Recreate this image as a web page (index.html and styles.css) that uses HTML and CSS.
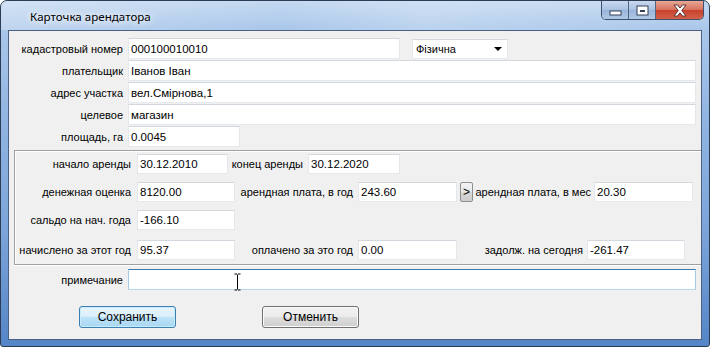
FILE: index.html
```html
<!DOCTYPE html>
<html lang="ru">
<head>
  <meta charset="UTF-8">
  <title>Карточка арендатора</title>
  <link rel="stylesheet" href="styles.css">
</head>
<body>
  <div class="window">
    <div class="titlebar">
      <span class="title">Карточка арендатора</span>
      <div class="caption">
        <span class="cap cap-min">
          <svg width="13" height="6" viewBox="0 0 13 6"><rect x="1" y="1" width="11" height="4" fill="#fff" stroke="#34425a" stroke-width="1"/></svg>
        </span>
        <span class="cap cap-max">
          <svg width="13" height="11" viewBox="0 0 13 11"><rect x="1" y="1" width="11" height="9" fill="#fff" stroke="#34425a"/><rect x="3.5" y="4.5" width="6" height="3" fill="#34425a" stroke="#fff" stroke-width="1"/></svg>
        </span>
        <span class="cap cap-close">
          <svg width="16" height="13" viewBox="0 0 16 13"><path d="M2 1h3.5l2.5 3 2.5-3H14l-4.2 5.5L14 12h-3.5L8 8.8 5.5 12H2l4.2-5.5z" fill="#fff" stroke="#4a2a26" stroke-width="0.9" stroke-linejoin="round"/></svg>
        </span>
      </div>
    </div>

    <div class="client">
      <!-- main fields -->
      <div class="top-fields">
        <div class="row">
          <label class="lbl lbl-top">кадастровый номер</label>
          <input class="tb w272" value="000100010010">
          <div class="combo">Фізична<span class="arrow"></span></div>
        </div>
        <div class="row">
          <label class="lbl lbl-top">плательщик</label>
          <input class="tb w568" value="Іванов Іван">
        </div>
        <div class="row">
          <label class="lbl lbl-top">адрес участка</label>
          <input class="tb w568" value="вел.Смірнова,1">
        </div>
        <div class="row">
          <label class="lbl lbl-top">целевое</label>
          <input class="tb w568" value="магазин">
        </div>
        <div class="row">
          <label class="lbl lbl-top">площадь, га</label>
          <input class="tb w112" value="0.0045">
        </div>
      </div>

      <!-- rent group -->
      <div class="group">
        <div class="grow">
          <label class="lbl lbl-grp">начало аренды</label>
          <input class="tb w91" value="30.12.2010">
          <label class="lbl cell w80 pr5">конец аренды</label>
          <input class="tb w92" value="30.12.2020">
        </div>
        <div class="grow">
          <label class="lbl lbl-grp">денежная оценка</label>
          <input class="tb w98" value="8120.00">
          <label class="lbl cell w123 pr5">арендная плата, в год</label>
          <input class="tb w99" value="243.60">
          <button class="mini">&gt;</button>
          <label class="lbl cell w121 pr3">арендная плата, в мес</label>
          <input class="tb w99" value="20.30">
        </div>
        <div class="grow">
          <label class="lbl lbl-grp">сальдо на нач. года</label>
          <input class="tb w98" value="-166.10">
        </div>
        <div class="grow last">
          <label class="lbl lbl-grp">начислено за этот год</label>
          <input class="tb w98" value="95.37">
          <label class="lbl cell w123 pr5">оплачено за это год</label>
          <input class="tb w99" value="0.00">
          <label class="lbl cell w130 pr4">задолж. на сегодня</label>
          <input class="tb w98" value="-261.47">
        </div>
      </div>

      <div class="row note">
        <label class="lbl lbl-top">примечание</label>
        <input class="tb w568 focused" value="">
        <svg class="ibeam" width="7" height="18" viewBox="0 0 7 18"><path d="M0.5 1h2.5M4 1h2.5M3.5 1.5v15M0.5 17h2.5M4 17h2.5" stroke="#000" stroke-width="1" fill="none"/></svg>
      </div>

      <div class="actions">
        <button class="btn btn-default">Сохранить</button>
        <button class="btn">Отменить</button>
      </div>
    </div>
  </div>
</body>
</html>
```

FILE: styles.css
```css
* {
  box-sizing: border-box;
}
body {
  margin: 0;
  background: #fff;
  font-family: "Liberation Sans", Arial, sans-serif;
  font-size: 11px;
  color: #000;
}
.window {
  width: 710px;
  height: 347px;
  display: flex;
  flex-direction: column;
  border: 1px solid #2b3c55;
  border-radius: 7px 7px 3px 3px;
  background: linear-gradient(180deg, #c4d9f1 0, #aac7ea 28px, #93b6e2 110px, #7ca4d9 230px, #5485c6 100%);
  overflow: hidden;
}
.titlebar {
  height: 29px;
  display: flex;
  align-items: flex-start;
  background: linear-gradient(100deg, rgba(255,255,255,0.25) 0, rgba(255,255,255,0) 40%, rgba(255,255,255,0.2) 60%, rgba(255,255,255,0) 100%);
}
.title {
  margin: 8px 0 0 29px;
  font-family: "Noto Sans", "Open Sans", sans-serif;
  font-size: 11.6px;
  line-height: 16px;
  color: #000;
  text-shadow: 0 0 6px #fff, 0 0 10px #fff;
}
.caption {
  display: flex;
  margin-left: auto;
  margin-right: 5px;
  height: 19px;
  border: 1px solid #3f506b;
  border-top: none;
  border-radius: 0 0 5px 5px;
  overflow: hidden;
}
.cap {
  display: flex;
  align-items: center;
  justify-content: center;
  height: 18px;
}
.cap-min {
  width: 27px;
  padding-top: 5px;
  background: linear-gradient(#c9d9ee, #a9c1e1 50%, #98b4da 50%, #b0c8e6);
  border-right: 1px solid #52657f;
}
.cap-max {
  width: 27px;
  background: linear-gradient(#c9d9ee, #a9c1e1 50%, #98b4da 50%, #b0c8e6);
  border-right: 1px solid #52657f;
}
.cap-close {
  width: 47px;
  background: linear-gradient(#e8a896, #d7705c 50%, #c8412c 50%, #d2604a);
}
.client {
  flex: 1;
  margin: 0 7px 6px 7px;
  border: 1px solid #4a6184;
  background: #f0f0f0;
  padding-top: 7px;
}
.top-fields {
  display: flex;
  flex-direction: column;
  gap: 1px;
}
.row {
  display: flex;
  align-items: center;
  height: 21px;
}
.lbl {
  text-align: right;
  white-space: nowrap;
}
.lbl-top {
  width: 114px;
  margin-right: 5px;
}
.tb {
  height: 21px;
  padding: 0 2px;
  border: 1px solid;
  border-color: #d3d8df #e4e7eb #e6e9ed #e4e7eb;
  background: #fff;
  font: inherit;
  font-size: 11.5px;
  color: #000;
  outline: none;
}
.tb.focused {
  border-color: #3d7bad #a4c9e3 #b7d9ed #a4c9e3;
}
.w91 { width: 91px; }
.w92 { width: 92px; }
.w98 { width: 98px; }
.w99 { width: 99px; }
.w112 { width: 112px; }
.w272 { width: 272px; }
.w568 { width: 568px; }
.combo {
  width: 96px;
  height: 20px;
  margin-left: 12px;
  padding-left: 3px;
  display: flex;
  align-items: center;
  justify-content: space-between;
  border: 1px solid;
  border-color: #d3d8df #e4e7eb #e6e9ed #e4e7eb;
  background: #fff;
}
.arrow {
  width: 0;
  height: 0;
  margin-right: 5px;
  border-top: 4px solid #000;
  border-left: 4px solid transparent;
  border-right: 4px solid transparent;
}
.group {
  margin: 3px 0 0 5px;
  padding: 3px 0 4px 0;
  display: flex;
  flex-direction: column;
  gap: 8px;
  border: 1px solid #a0a0a0;
  border-right: none;
  box-shadow: inset 1px 1px 0 #fff, 0 1px 0 #fff;
}
.grow {
  display: flex;
  align-items: center;
  height: 20px;
}
.grow .tb {
  height: 20px;
}
.grow.last {
  margin-top: 2px;
}
.lbl-grp {
  width: 116px;
  margin-right: 6px;
}
.cell { flex: none; }
.w80 { width: 80px; }
.w121 { width: 121px; }
.w123 { width: 123px; }
.w130 { width: 130px; }
.pr3 { padding-right: 3px; }
.pr4 { padding-right: 4px; }
.pr5 { padding-right: 5px; }
.mini {
  width: 13px;
  height: 20px;
  margin-left: 3px;
  padding: 0;
  border: 1px solid #8e8f8f;
  border-radius: 2px;
  background: linear-gradient(#f4f4f4, #e6e6e6 50%, #d8d8d8 50%, #cdcdcd);
  font: inherit;
  font-size: 12px;
  line-height: 18px;
}
.note {
  position: relative;
  margin-top: 4px;
}
.ibeam {
  position: absolute;
  left: 225px;
  top: 4px;
}
.actions {
  display: flex;
  gap: 86px;
  margin-top: 16px;
  padding-left: 70px;
}
.btn {
  width: 97px;
  height: 22px;
  padding: 0;
  border: 1px solid #707070;
  border-radius: 3px;
  background: linear-gradient(#f2f2f2, #ebebeb 50%, #dddddd 50%, #cfcfcf);
  box-shadow: inset 0 0 0 1px #fbfbfb;
  font: inherit;
  font-size: 12px;
  color: #000;
}
.btn-default {
  border-color: #3c7fb1;
  background: linear-gradient(#e9f5fc, #d9eefb 50%, #bde3f8 50%, #a8d6f2);
  box-shadow: inset 0 0 0 1px #c8ecfd;
}
```
